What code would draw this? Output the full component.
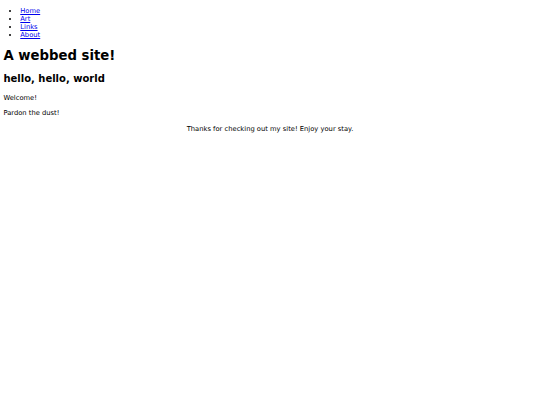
export default function App() {
  return (
    <div className="m-[0.5em] text-[6.75px] leading-[normal] text-black font-['DejaVu_Sans',sans-serif]">
      <ul className="my-[1em] list-disc pl-[2.5em]">
        <li>
          <a href="#" className="text-[#0000ee] underline">Home</a>
        </li>
        <li>
          <a href="#" className="text-[#0000ee] underline">Art</a>
        </li>
        <li>
          <a href="#" className="text-[#0000ee] underline">Links</a>
        </li>
        <li>
          <a href="#" className="text-[#0000ee] underline">About</a>
        </li>
      </ul>
      <h1 className="my-[9px] text-[13.25px] font-bold">A webbed site!</h1>
      <h2 className="mt-[10px] mb-[10px] text-[10px] font-bold">hello, hello, world</h2>
      <p className="my-[1em]">Welcome!</p>
      <p className="my-[1em]">Pardon the dust!</p>
      <p className="mt-[8px] mb-[1em] text-center">Thanks for checking out my site! Enjoy your stay.</p>
    </div>
  );
}
